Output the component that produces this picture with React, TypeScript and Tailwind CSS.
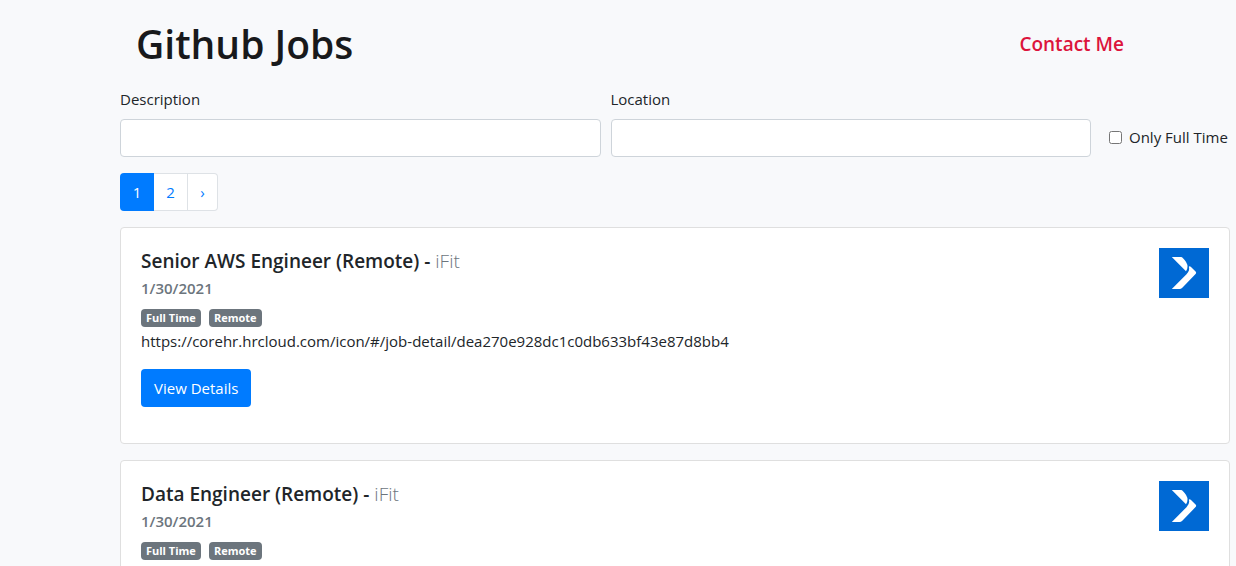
type Job = {
  id: number;
  title: string;
  company: string;
  date: string;
  tags: string[];
  url: string;
};

const jobs: Job[] = [
  {
    id: 1,
    title: "Senior AWS Engineer (Remote)",
    company: "iFit",
    date: "1/30/2021",
    tags: ["Full Time", "Remote"],
    url: "https://corehr.hrcloud.com/icon/#/job-detail/dea270e928dc1c0db633bf43e87d8bb4",
  },
  {
    id: 2,
    title: "Data Engineer (Remote)",
    company: "iFit",
    date: "1/30/2021",
    tags: ["Full Time", "Remote"],
    url: "https://corehr.hrcloud.com/icon/#/job-detail/dea270e928dc1c0db633bf43e87d8bb4",
  },
];

function CompanyLogo() {
  return (
    <svg className="size-[50px] shrink-0" viewBox="0 0 50 50" role="img" aria-label="iFit logo">
      <rect width="50" height="50" fill="#0069d4" />
      <path d="M12.800 9H22Q23 9 24 10.200Q28.500 14.500 28.500 18.500Q28.500 21.500 27 23.300Z" fill="#fff" />
      <path d="M30.500 18.300Q31.200 18.200 32 19L36.800 23.800Q37.500 24.800 36.800 25.800L23.300 39.800Q22 41 20.500 41H12.800L27.500 26.200Q31.200 22.500 29.800 18.800Z" fill="#fff" />
    </svg>
  );
}

function JobCard({ job }: { job: Job }) {
  return (
    <article className="flex justify-between rounded border border-[#dfdfdf] bg-white p-5">
      <div className="min-w-0">
        <h2 className="mb-1.5 pt-0.5 text-[19px] leading-[22px] font-semibold">
          {job.title} - <span className="font-light text-[#6c757d]">{job.company}</span>
        </h2>
        <p className="mb-2 pt-px text-[15px] leading-[18px] font-semibold text-[#6c757d]">{job.date}</p>
        <div className="flex h-6 items-center gap-2 pt-0.5">
          {job.tags.map((tag) => (
            <span key={tag} className="rounded bg-[#6c757d] px-[5px] text-[11px] leading-[18px] font-bold text-white">
              {tag}
            </span>
          ))}
        </div>
        <p className="mb-4 break-words">{job.url}</p>
        <button type="button" className="mb-4 h-[38px] rounded bg-[#007bff] px-[13px] text-white">
          View Details
        </button>
      </div>
      <CompanyLogo />
    </article>
  );
}

export default function App() {
  return (
    <div className="min-h-screen bg-[#f8f9fb] pt-5 pr-1.5 pl-[120px] font-['Open_Sans',sans-serif] text-[15px] leading-6 text-[#212529]">
      <header className="mb-5 flex items-center justify-between pr-[106px] pl-4">
        <h1 className="text-[39px] leading-[47px] font-semibold text-[#18191b]">Github Jobs</h1>
        <a href="#contact" className="text-[19px] font-semibold text-[#dc143c]">
          Contact Me
        </a>
      </header>

      <form className="mb-4 flex items-end">
        <div className="mr-2.5 flex-1">
          <label htmlFor="description" className="mb-2 block">
            Description
          </label>
          <input id="description" type="text" className="block h-[38px] w-full rounded border border-[#ced4da] bg-white px-3" />
        </div>
        <div className="flex-1">
          <label htmlFor="location" className="mb-2 block">
            Location
          </label>
          <input id="location" type="text" className="block h-[38px] w-full rounded border border-[#ced4da] bg-white px-3" />
        </div>
        <div className="ml-[18px] flex h-[38px] items-center gap-[7px] pb-0.5">
          <input id="full-time" type="checkbox" className="size-[13px]" />
          <label htmlFor="full-time" className="min-w-[101px] whitespace-nowrap">
            Only Full Time
          </label>
        </div>
      </form>

      <nav aria-label="Pages" className="mb-4 flex h-[38px] text-[#007bff]">
        <button type="button" aria-current="page" className="w-[34px] rounded-l bg-[#007bff] text-white">
          1
        </button>
        <button type="button" className="w-[34px] border-y border-r border-[#dee2e6] bg-white">
          2
        </button>
        <button type="button" aria-label="Next" className="w-[30px] rounded-r border-y border-r border-[#dee2e6] bg-white">
          ›
        </button>
      </nav>

      <main className="flex flex-col gap-4">
        {jobs.map((job) => (
          <JobCard key={job.id} job={job} />
        ))}
      </main>
    </div>
  );
}
